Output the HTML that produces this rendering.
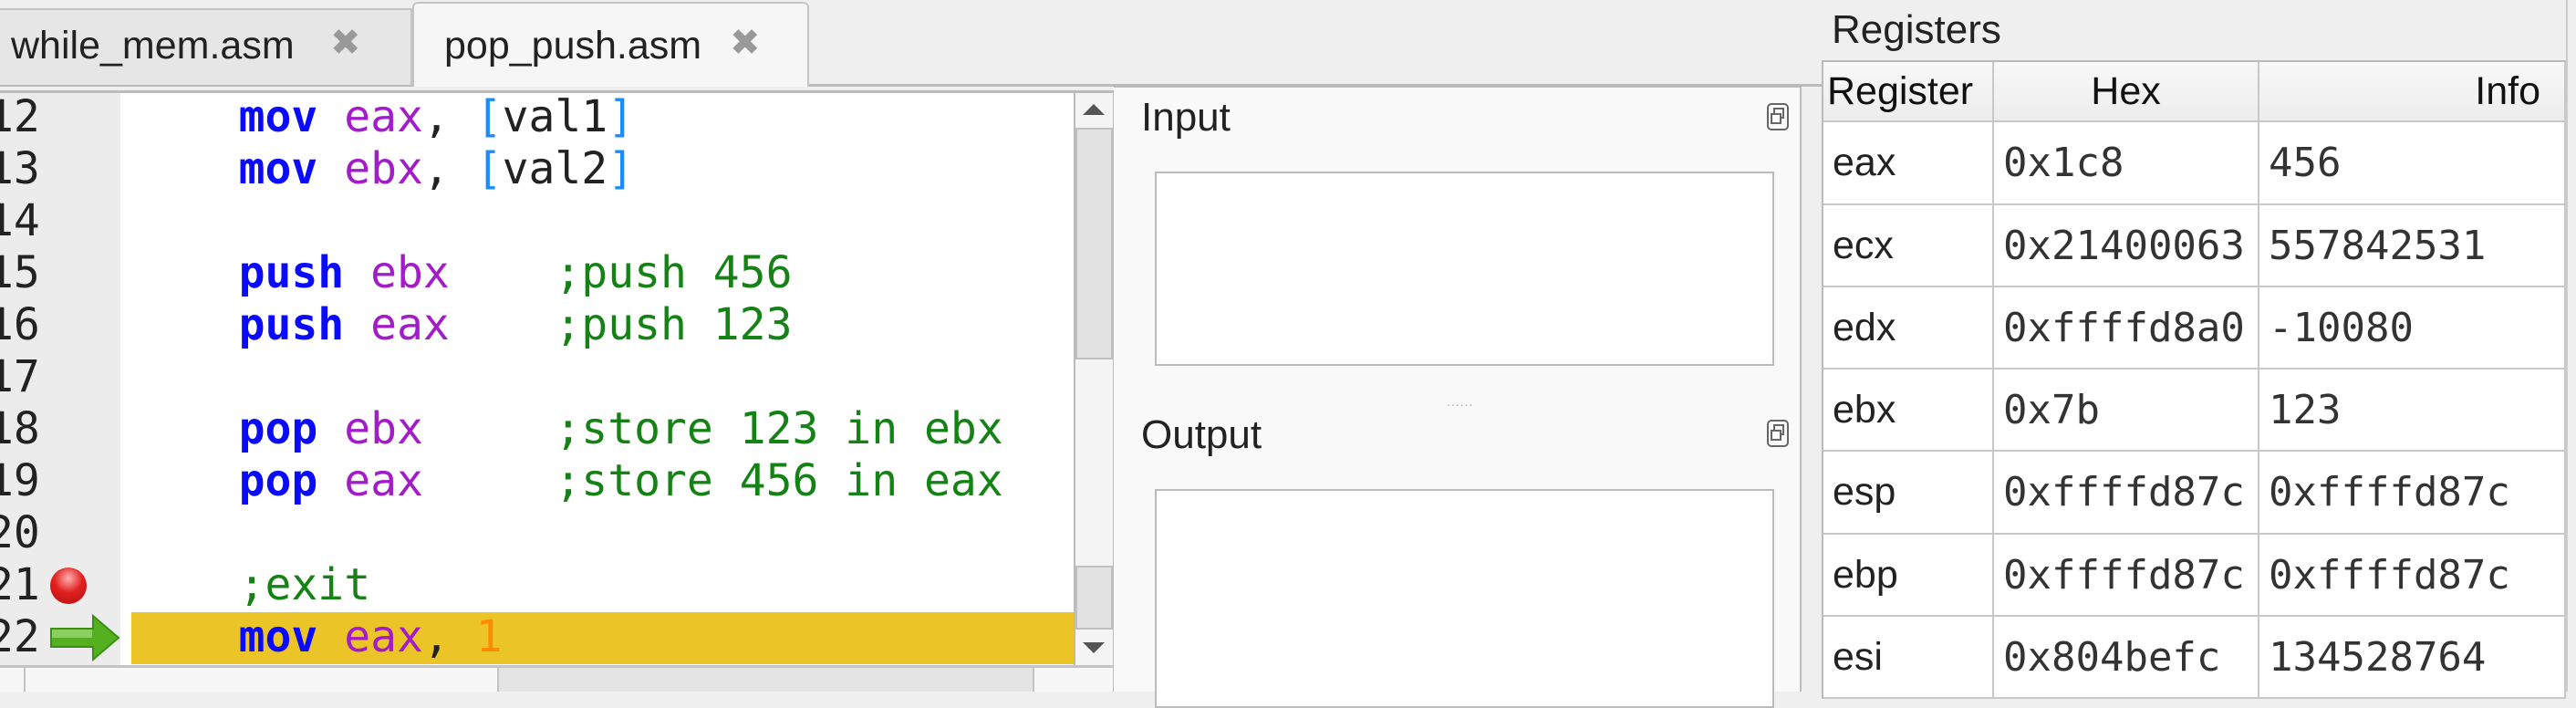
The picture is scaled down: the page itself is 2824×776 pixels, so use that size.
<!DOCTYPE html>
<html><head><meta charset="utf-8"><style>
body{margin:0;width:2824px;height:758px;overflow:hidden;background:#efefef;position:relative;font-family:"Liberation Sans","DejaVu Sans",sans-serif}
.a{position:absolute}
.code{font-family:"DejaVu Sans Mono","Liberation Mono",monospace;font-size:48px;line-height:57px;white-space:pre}
.k{color:#0a0aff;font-weight:bold}.r{color:#a21cc8}.b{color:#1a8cff}.c{color:#148214}.n{color:#ff8a00}
.mono{font-family:"DejaVu Sans Mono","Liberation Mono",monospace;font-size:44px;color:#333}
.cell{position:absolute;border-right:2px solid #c8c8c8;border-bottom:2px solid #c8c8c8;box-sizing:border-box;display:flex;align-items:center;padding-left:10px}
.s{font-size:43px;color:#222}
</style></head><body>
<!-- tabs -->
<div class="a" style="left:0;top:92px;width:2000px;height:3px;background:#bbb"></div>
<div class="a" style="left:-4px;top:9px;width:456px;height:84px;background:#e6e6e6;border:2px solid #c4c4c4;border-bottom:none;box-sizing:border-box"></div>
<div class="a s" style="left:12px;top:26px">while_mem.asm</div>
<div class="a" style="left:362px;top:24px;font-size:40px;color:#999;font-weight:bold">✖</div>
<div class="a" style="left:452px;top:2px;width:435px;height:93px;background:#f6f6f6;border:2px solid #c4c4c4;border-bottom:none;border-radius:6px 6px 0 0;box-sizing:border-box"></div>
<div class="a s" style="left:487px;top:26px">pop_push.asm</div>
<div class="a" style="left:800px;top:24px;font-size:40px;color:#999;font-weight:bold">✖</div>
<!-- editor -->
<div class="a" style="left:0;top:99px;width:1222px;height:659px;background:#fff;border-top:3px solid #bbb;border-right:2px solid #bbb;box-sizing:border-box"></div>
<div class="a" style="left:0;top:102px;width:132px;height:628px;background:#ececec"></div>
<div class="a" style="left:144px;top:671px;width:1033px;height:57px;background:#ebc428"></div>
<div class="a code" style="left:-14px;top:100px;color:#222">12
13
14
15
16
17
18
19
20
21
22</div>
<div class="a" style="left:55px;top:622px;width:40px;height:40px;border-radius:50%;background:radial-gradient(circle at 50% 30%,#ffb0b0,#e22020 45%,#b01010)"></div>
<svg class="a" style="left:54px;top:672px" width="78" height="54" viewBox="0 0 78 54"><path d="M2 17h46V3l28 24-28 24V37H2z" fill="#55b020" stroke="#3a9010" stroke-width="2"/><rect x="3" y="18" width="44" height="9" fill="#8ad060"/></svg>
<div class="a code" style="left:146px;top:100px;color:#222">    <span class="k">mov</span> <span class="r">eax</span>, <span class="b">[</span>val1<span class="b">]</span>
    <span class="k">mov</span> <span class="r">ebx</span>, <span class="b">[</span>val2<span class="b">]</span>

    <span class="k">push</span> <span class="r">ebx</span>    <span class="c">;push 456</span>
    <span class="k">push</span> <span class="r">eax</span>    <span class="c">;push 123</span>

    <span class="k">pop</span> <span class="r">ebx</span>     <span class="c">;store 123 in ebx</span>
    <span class="k">pop</span> <span class="r">eax</span>     <span class="c">;store 456 in eax</span>

    <span class="c">;exit</span>
    <span class="k">mov</span> <span class="r">eax</span>, <span class="n">1</span></div>
<!-- vscroll -->
<div class="a" style="left:1177px;top:102px;width:43px;height:628px;background:#f4f4f4;border-left:2px solid #bbb;box-sizing:border-box"></div>
<div class="a" style="left:1179px;top:140px;width:41px;height:254px;background:#e2e2e2;border:2px solid #c0c0c0;box-sizing:border-box"></div>
<div class="a" style="left:1179px;top:620px;width:41px;height:70px;background:#e2e2e2;border:2px solid #c0c0c0;box-sizing:border-box"></div>
<div class="a" style="left:1187px;top:114px;width:0;height:0;border-left:12px solid transparent;border-right:12px solid transparent;border-bottom:12px solid #555"></div>
<div class="a" style="left:1187px;top:704px;width:0;height:0;border-left:12px solid transparent;border-right:12px solid transparent;border-top:12px solid #555"></div>
<!-- hscroll -->
<div class="a" style="left:0;top:729px;width:1220px;height:29px;background:#f7f7f7;border-top:3px solid #c4c4c4;box-sizing:border-box"></div>
<div class="a" style="left:26px;top:732px;width:2px;height:26px;background:#c4c4c4"></div>
<div class="a" style="left:545px;top:732px;width:589px;height:26px;background:#e4e4e4;border-left:2px solid #c4c4c4;border-right:2px solid #c4c4c4;box-sizing:border-box"></div>
<!-- IO panel -->
<div class="a" style="left:1221px;top:93px;width:754px;height:665px;background:#f9f9f9;border-top:3px solid #bbb;border-right:2px solid #bbb;box-sizing:border-box"></div>
<div class="a" style="left:1251px;top:104px;font-size:44px;color:#222">Input</div>
<div class="a" style="left:1266px;top:188px;width:679px;height:213px;background:#fff;border:2px solid #bbb;box-sizing:border-box"></div>
<div class="a" style="left:1586px;top:432px;font-size:14px;color:#aaa;letter-spacing:1px">......</div>
<div class="a" style="left:1251px;top:452px;font-size:44px;color:#222">Output</div>
<div class="a" style="left:1266px;top:536px;width:679px;height:240px;background:#fff;border:2px solid #bbb;box-sizing:border-box"></div>
<svg class="a" style="left:1937px;top:113px" width="24" height="30" viewBox="0 0 24 30"><rect x="1" y="1" width="22" height="28" rx="4" fill="none" stroke="#666" stroke-width="2"/><rect x="8" y="6" width="10" height="10" fill="none" stroke="#666" stroke-width="2"/><rect x="5" y="12" width="10" height="10" fill="#fff" stroke="#666" stroke-width="2"/></svg>
<svg class="a" style="left:1937px;top:460px" width="24" height="30" viewBox="0 0 24 30"><rect x="1" y="1" width="22" height="28" rx="4" fill="none" stroke="#666" stroke-width="2"/><rect x="8" y="6" width="10" height="10" fill="none" stroke="#666" stroke-width="2"/><rect x="5" y="12" width="10" height="10" fill="#fff" stroke="#666" stroke-width="2"/></svg>
<!-- registers -->
<div class="a" style="left:2008px;top:8px;font-size:44px;color:#222">Registers</div>
<div class="a" style="left:1997px;top:66px;width:816px;height:700px;background:#fff;border:2px solid #bbb;border-right:none;box-sizing:border-box"></div>
<div class="a" style="left:1999px;top:68px;width:814px;height:66px;background:linear-gradient(#f8f8f8,#ececec)"></div>
<div class="cell" style="left:1999px;top:68px;width:187px;height:66px;font-size:43px;color:#111;padding-left:4px">Register</div>
<div class="cell" style="left:2186px;top:68px;width:291px;height:66px;font-size:43px;color:#111;justify-content:center;padding:0">Hex</div>
<div class="cell" style="left:2477px;top:68px;width:336px;height:66px;font-size:43px;color:#111;justify-content:flex-end;padding-right:26px">Info</div>
<div class="a" style="left:2813px;top:0;width:11px;height:758px;background:#efefef;border-left:2px solid #ccc;box-sizing:border-box"></div>

<div class="cell s" style="left:1999px;top:134px;width:187px;height:91px">eax</div><div class="cell mono" style="left:2186px;top:134px;width:291px;height:91px">0x1c8</div><div class="cell mono" style="left:2477px;top:134px;width:336px;height:91px">456</div>
<div class="cell s" style="left:1999px;top:225px;width:187px;height:90px">ecx</div><div class="cell mono" style="left:2186px;top:225px;width:291px;height:90px">0x21400063</div><div class="cell mono" style="left:2477px;top:225px;width:336px;height:90px">557842531</div>
<div class="cell s" style="left:1999px;top:315px;width:187px;height:90px">edx</div><div class="cell mono" style="left:2186px;top:315px;width:291px;height:90px">0xffffd8a0</div><div class="cell mono" style="left:2477px;top:315px;width:336px;height:90px">-10080</div>
<div class="cell s" style="left:1999px;top:405px;width:187px;height:90px">ebx</div><div class="cell mono" style="left:2186px;top:405px;width:291px;height:90px">0x7b</div><div class="cell mono" style="left:2477px;top:405px;width:336px;height:90px">123</div>
<div class="cell s" style="left:1999px;top:495px;width:187px;height:91px">esp</div><div class="cell mono" style="left:2186px;top:495px;width:291px;height:91px">0xffffd87c</div><div class="cell mono" style="left:2477px;top:495px;width:336px;height:91px">0xffffd87c</div>
<div class="cell s" style="left:1999px;top:586px;width:187px;height:90px">ebp</div><div class="cell mono" style="left:2186px;top:586px;width:291px;height:90px">0xffffd87c</div><div class="cell mono" style="left:2477px;top:586px;width:336px;height:90px">0xffffd87c</div>
<div class="cell s" style="left:1999px;top:676px;width:187px;height:90px">esi</div><div class="cell mono" style="left:2186px;top:676px;width:291px;height:90px">0x804befc</div><div class="cell mono" style="left:2477px;top:676px;width:336px;height:90px">134528764</div>
</body></html>
